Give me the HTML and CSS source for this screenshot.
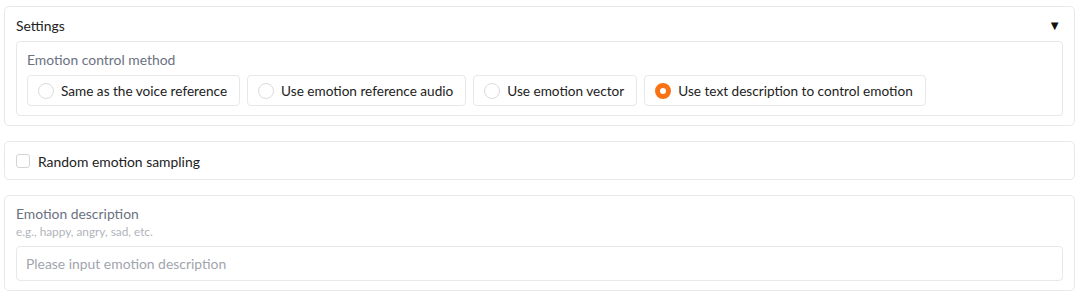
FILE: index.html
```html
<!DOCTYPE html>
<html lang="en">
<head>
    <meta charset="UTF-8">
    <title>Emotion Settings</title>
    <link rel="stylesheet" href="styles.css">
</head>
<body>
<div class="page">
    <div class="block">
        <div class="block-head">
            <span>Settings</span>
            <span class="caret">&#9660;</span>
        </div>
        <div class="group">
            <div class="label">Emotion control method</div>
            <div class="radios">
                <label class="radio"><span class="dot"></span>Same as the voice reference</label>
                <label class="radio"><span class="dot"></span>Use emotion reference audio</label>
                <label class="radio"><span class="dot"></span>Use emotion vector</label>
                <label class="radio selected"><span class="dot"></span>Use text description to control emotion</label>
            </div>
        </div>
    </div>
    <div class="block check-row">
        <span class="box"></span>
        <span>Random emotion sampling</span>
    </div>
    <div class="block field">
        <div class="label">Emotion description</div>
        <div class="hint">e.g., happy, angry, sad, etc.</div>
        <div class="input">Please input emotion description</div>
    </div>
</div>
</body>
</html>
```

FILE: styles.css
```css
body { margin: 0; background: #fff; font-family: 'Lato', 'Noto Sans', Arial, sans-serif; font-size: 13.9px; color: #222; }
.page { padding: 6px 5px 0 4px; display: flex; flex-direction: column; gap: 15px; }
.block { border: 1px solid #e8e8ea; border-radius: 5px; padding: 8px 11px 9px; }
.block-head { display: flex; justify-content: space-between; align-items: center; height: 20px; margin-bottom: 6px; }
.caret { font-size: 13px; color: #111; margin-right: 2px; }
.group { border: 1px solid #e8e8ea; border-radius: 4px; padding: 8px 10px 9px; }
.label { color: #6b7280; line-height: 20px; }
.radios { display: flex; gap: 7px; margin-top: 5px; font-size: 13.6px; }
.radio { display: flex; align-items: center; gap: 7px; height: 29px; padding: 0 12px 0 10px; border: 1px solid #e8e8ea; border-radius: 4px; }
.dot { width: 14px; height: 14px; border: 1px solid #dcdcdf; border-radius: 50%; box-sizing: content-box; }
.radio.selected .dot { width: 6px; height: 6px; border: 5px solid #f97316; }
.check-row { display: flex; align-items: center; gap: 8px; height: 20px; padding-top: 9px; padding-bottom: 8px; }
.box { width: 12px; height: 12px; border: 1px solid #d4d4d8; border-radius: 3px; }
.hint { color: #b0b4bb; font-size: 11.8px; line-height: 16px; margin-bottom: 6px; }
.input { border: 1px solid #e8e8ea; border-radius: 4px; height: 33px; line-height: 33px; padding: 0 9px; color: #a1a5ad; }
```
